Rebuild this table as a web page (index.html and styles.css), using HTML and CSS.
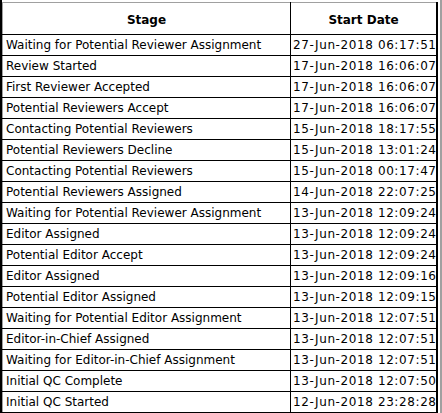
FILE: index.html
```html
<!DOCTYPE html>
<html>
<head>
<meta charset="utf-8">
<link rel="stylesheet" href="styles.css">
</head>
<body>
<div class="frame">
<table class="grid">
<thead>
<tr><th class="c-stage">Stage</th><th class="c-date">Start Date</th></tr>
</thead>
<tbody>
<tr><td>Waiting for Potential Reviewer Assignment</td><td class="date">27-Jun-2018 06:17:51</td></tr>
<tr><td>Review Started</td><td class="date">17-Jun-2018 16:06:07</td></tr>
<tr><td>First Reviewer Accepted</td><td class="date">17-Jun-2018 16:06:07</td></tr>
<tr><td>Potential Reviewers Accept</td><td class="date">17-Jun-2018 16:06:07</td></tr>
<tr><td>Contacting Potential Reviewers</td><td class="date">15-Jun-2018 18:17:55</td></tr>
<tr><td>Potential Reviewers Decline</td><td class="date">15-Jun-2018 13:01:24</td></tr>
<tr><td>Contacting Potential Reviewers</td><td class="date">15-Jun-2018 00:17:47</td></tr>
<tr><td>Potential Reviewers Assigned</td><td class="date">14-Jun-2018 22:07:25</td></tr>
<tr><td>Waiting for Potential Reviewer Assignment</td><td class="date">13-Jun-2018 12:09:24</td></tr>
<tr><td>Editor Assigned</td><td class="date">13-Jun-2018 12:09:24</td></tr>
<tr><td>Potential Editor Accept</td><td class="date">13-Jun-2018 12:09:24</td></tr>
<tr><td>Editor Assigned</td><td class="date">13-Jun-2018 12:09:16</td></tr>
<tr><td>Potential Editor Assigned</td><td class="date">13-Jun-2018 12:09:15</td></tr>
<tr><td>Waiting for Potential Editor Assignment</td><td class="date">13-Jun-2018 12:07:51</td></tr>
<tr><td>Editor-in-Chief Assigned</td><td class="date">13-Jun-2018 12:07:51</td></tr>
<tr><td>Waiting for Editor-in-Chief Assignment</td><td class="date">13-Jun-2018 12:07:51</td></tr>
<tr><td>Initial QC Complete</td><td class="date">13-Jun-2018 12:07:50</td></tr>
<tr><td>Initial QC Started</td><td class="date">12-Jun-2018 23:28:28</td></tr>
</tbody>
</table>
</div>
</body>
</html>
```

FILE: styles.css
```css
html, body {
  margin: 0;
  padding: 0;
  background: #fff;
}
.frame {
  width: 438px;
  padding-top: 2px;
  border-left: 2px solid #000;
  border-right: 2px solid #a0a0a0;
}
.grid {
  border-collapse: collapse;
  width: 436px;
  table-layout: fixed;
  font-family: "DejaVu Sans", Verdana, sans-serif;
  font-size: 12px;
  color: #000;
  border-top: 1px solid #a0a0a0;
  border-left: 1px solid #a0a0a0;
  border-right: 2px solid #000;
}
.c-stage { width: 281px; }
.grid th {
  height: 29px;
  padding: 2px 3px 0;
  font-weight: bold;
  text-align: center;
  border-left: 1px solid #000;
  border-bottom: 1px solid #000;
}
.grid td {
  height: 20px;
  padding: 0 2px 0 3px;
  white-space: nowrap;
  overflow: hidden;
  border: 1px solid #000;
  border-top: 0;
}
.grid td.date {
  padding: 0 0 0 2px;
  letter-spacing: 0.6px;
}
.grid th:first-child, .grid td:first-child { border-left: 1px solid #a0a0a0; }
```
